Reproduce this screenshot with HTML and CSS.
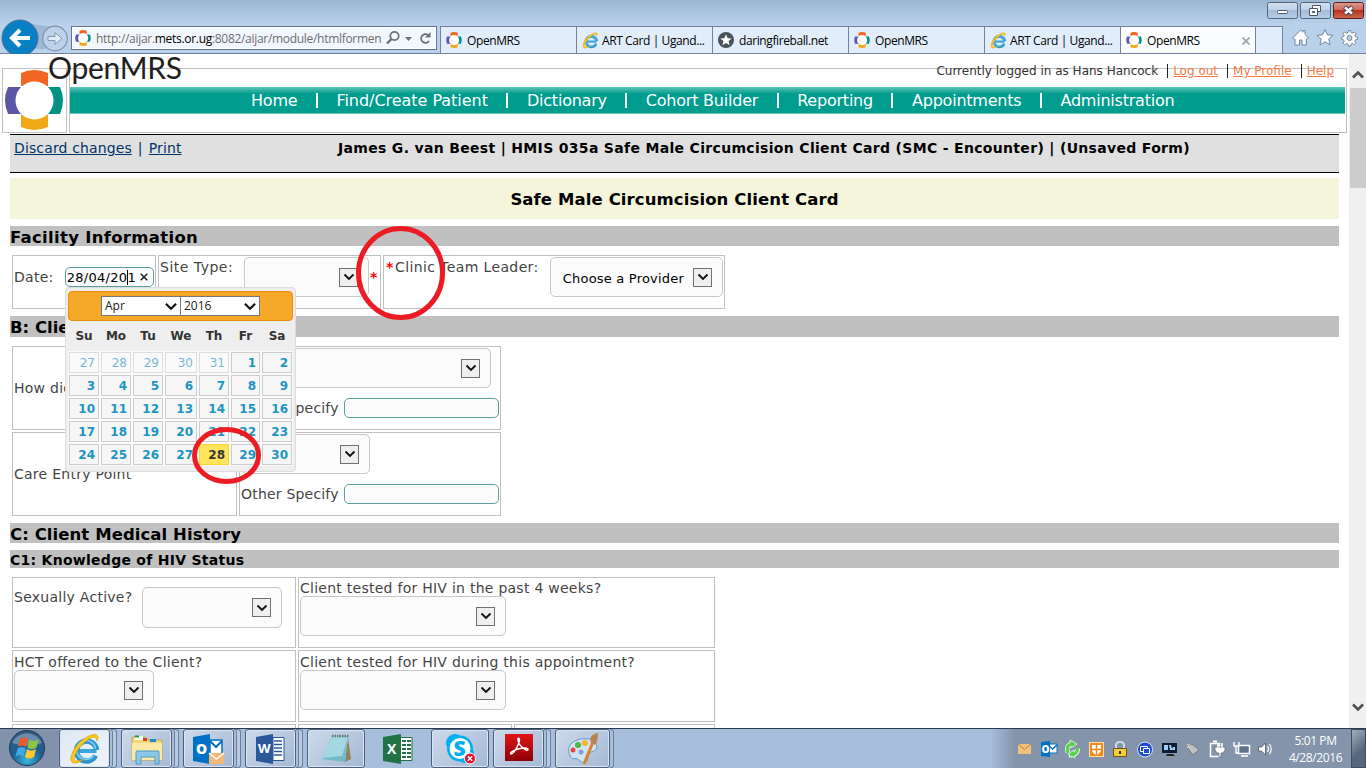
FILE: index.html
```html
<!DOCTYPE html>
<html lang="en">
<head>
<meta charset="utf-8">
<title>OpenMRS</title>
<link rel="stylesheet" href="styles.css">
</head>
<body>
<svg class="defs" width="0" height="0">
  <defs>
    <symbol id="mrs" viewBox="0 0 58 60">
      <path d="M16 3Q29-3 43 3V16H16Z" fill="#f26522"/>
      <path d="M16 44H43V57Q29 63 16 57Z" fill="#f0a818"/>
      <path d="M3 17H16V44H3Q-3 30 3 17Z" fill="#5b57a6"/>
      <path d="M42 17H55Q61 30 55 44H42Z" fill="#009384"/>
      <circle cx="29.500" cy="30.500" r="19" fill="#fff"/>
    </symbol>
    <symbol id="ie" viewBox="0 0 32 32">
      <path d="M27.500 18H9.500" stroke="#3ba4dc" stroke-width="4"/>
      <path d="M26.500 22.500A10 10 0 1 1 27.500 17" fill="none" stroke="#2f93cf" stroke-width="5.500"/>
      <path d="M25 22A9.500 9.500 0 1 1 26.500 16" fill="none" stroke="#72cdf3" stroke-width="1.800"/>
      <path d="M4 30C-3 26 8 8 20 3 27 0 31 2 28 8 28 3 23 3 17 8 8 15 1 28 8 28Q12 28 15 26 9 31 4 30Z" fill="#fcc71b" stroke="#e0a000" stroke-width=".7"/>
    </symbol>
    <symbol id="chev" viewBox="0 0 12 8"><path d="M1.500 1.500 6 6 10.500 1.500" fill="none" stroke="#111" stroke-width="1.900"/></symbol>
  </defs>
</svg>

<header class="chrome">
  <div class="titlebar">
    <svg class="winbtns" width="98" height="18" viewBox="0 0 98 18">
      <defs>
        <linearGradient id="gb" x2="0" y2="1"><stop offset="0" stop-color="#d2e0f0"/><stop offset=".48" stop-color="#bfd2e8"/><stop offset=".5" stop-color="#a4bcd8"/><stop offset="1" stop-color="#b9cfe8"/></linearGradient>
        <linearGradient id="gr" x2="0" y2="1"><stop offset="0" stop-color="#dc9a90"/><stop offset=".48" stop-color="#cf6857"/><stop offset=".5" stop-color="#b8321c"/><stop offset="1" stop-color="#cd6a4d"/></linearGradient>
      </defs>
      <rect x="1.500" y=".5" width="30" height="16" rx="2" fill="url(#gb)" stroke="#54657c"/>
      <rect x="34.500" y=".5" width="30" height="16" rx="2" fill="url(#gb)" stroke="#54657c"/>
      <rect x="67.500" y=".5" width="30" height="16" rx="2" fill="url(#gr)" stroke="#5e1c1c"/>
      <rect x="11.500" y="8.500" width="10" height="3" rx="1" fill="#fff" stroke="#4d5666"/>
      <path d="M46.500 3.500h8v6h-8z" fill="#fff" stroke="#4d5666"/>
      <path d="M43.500 6.500h8v7h-8z" fill="#fff" stroke="#4d5666"/><path d="M46.500 9.500h2v1h-2z" fill="#8ba" stroke="#4d5666"/>
      <path d="m78.500 5 8 7m0-7-8 7" stroke="#4d4a5a" stroke-width="4.500"/><path d="m79 5.500 7 6m0-6-7 6" stroke="#fff" stroke-width="2.400"/>
    </svg>
  </div>
  <div class="navrow">
    <svg class="navbtns" width="71" height="35" viewBox="0 0 71 35">
      <path d="M22 2Q42 8 53 7L60 12 45 30H20Z" fill="#94a9c5" opacity=".65"/>
      <circle cx="20" cy="19" r="18" fill="#0a80c4" stroke="#4a6f96"/>
      <path d="M30 19H12m8-8-8 8 8 8" fill="none" stroke="#fff" stroke-width="4"/>
      <circle cx="55" cy="19.500" r="12.300" fill="#bdd2ea" stroke="#7f93ac" stroke-width="1.200"/>
      <path d="M48 17.500h7v-4l7 6-7 6v-4h-7z" fill="#e0eaf5" stroke="#8497ae"/>
    </svg>
    <div class="address">
      <svg width="16" height="16"><use href="#mrs"/></svg>
      <span class="url">http://aijar.<b>mets.or.ug</b>:8082/aijar/module/htmlformen</span>
      <svg class="addr-icons" width="48" height="16" viewBox="0 0 48 16">
        <circle cx="8.500" cy="6" r="4.200" fill="none" stroke="#6d7073" stroke-width="1.800"/><path d="M5.500 9 1 13.500" stroke="#6d7073" stroke-width="2.400"/>
        <path d="M19 7h7l-3.500 4z" fill="#6d7073"/>
        <path d="M43 11A4.300 4.300 0 1 1 42 5" fill="none" stroke="#6d7073" stroke-width="1.900"/><path d="M44.500 2v5.500H39z" fill="#6d7073"/>
      </svg>
    </div>
    <div class="tabs">
      <div class="tab"><svg width="16" height="16"><use href="#mrs"/></svg><span>OpenMRS</span></div>
      <div class="tab"><svg width="17" height="17"><use href="#ie"/></svg><span class="art">ART Card | Ugand...</span></div>
      <div class="tab"><svg width="16" height="16" viewBox="0 0 16 16"><circle cx="8" cy="8" r="8" fill="#4a525a"/><path d="m8 2.200 1.600 4 4.200.2-3.300 2.700 1.100 4.100L8 10.900l-3.600 2.300 1.100-4.100L2.200 6.400l4.200-.2z" fill="#fff"/></svg><span>daringfireball.net</span></div>
      <div class="tab"><svg width="16" height="16"><use href="#mrs"/></svg><span>OpenMRS</span></div>
      <div class="tab"><svg width="17" height="17"><use href="#ie"/></svg><span class="art">ART Card | Ugand...</span></div>
      <div class="tab active"><svg width="16" height="16"><use href="#mrs"/></svg><span>OpenMRS</span><svg class="close" width="8" height="8" viewBox="0 0 8 8"><path d="m.5.500 7 7m0-7-7 7" stroke="#a2a6ab" stroke-width="1.800"/></svg></div>
      <div class="newtab"></div>
    </div>
    <svg class="tools" width="68" height="20" viewBox="0 0 68 20" fill="#fff" stroke="#75879c" stroke-width="1">
      <path d="m.7 10 8-8 2.300 2.300V2.500h2v3.800l3.500 3.700-1.500 1.500-.7-.6V17H10v-5H7.500v5H3v-6.100l-.8.600z"/>
      <path d="m33 1.500 2.300 5.300 5.800.5-4.400 3.800 1.400 5.700-5.100-3-5.100 3 1.400-5.700-4.400-3.800 5.800-.5z"/>
      <path d="M56.500 2.500h2l.5 2 1.500.6 2-1.200 1.500 1.500-1.200 2 .6 1.400 2.100.5v2l-2.100.6-.6 1.400 1.200 1.900-1.500 1.500-2-1.200-1.500.7-.5 2h-2l-.5-2-1.500-.7-2 1.200-1.500-1.500 1.200-1.900-.6-1.400-2.100-.6v-2l2.100-.5.600-1.400-1.200-2 1.500-1.500 2 1.200 1.500-.6z"/><circle cx="57.500" cy="10" r="2.500" fill="#b8cde8"/>
    </svg>
  </div>
</header>

<div class="view">
  <main class="page">
    <div class="banner">
      <div class="logo-box"><svg width="58" height="60"><use href="#mrs"/></svg></div>
      <span class="wordmark">OpenMRS</span>
      <div class="banner-main">
        <div class="user"><span class="who">Currently logged in as Hans Hancock</span><span class="ul"><a>Log out</a></span><span class="ul"><a>My Profile</a></span><span class="ul"><a>Help</a></span></div>
        <nav class="menu"><span>Home</span><i></i><span class="find">Find/Create Patient</span><i></i><span>Dictionary</span><i></i><span>Cohort Builder</span><i></i><span>Reporting</span><i></i><span>Appointments</span><i></i><span>Administration</span></nav>
      </div>
    </div>

    <div class="form">
      <div class="formhead"><span class="links"><a>Discard changes</a><span class="vbar">|</span><a>Print</a></span><b>James G. van Beest | HMIS 035a Safe Male Circumcision Client Card (SMC - Encounter) | (Unsaved Form)</b></div>
      <div class="cardtitle">Safe Male Circumcision Client Card</div>

      <h3 class="bar b1">Facility Information</h3>
      <div class="grid g1">
        <div class="cell date"><span>Date:</span><div class="dateinput"><span>28/04/20<i class="caret"></i>1</span><svg width="8" height="8" viewBox="0 0 8 8"><path d="m.7.700 6.600 6.600m0-6.600-6.600 6.600" stroke="#222" stroke-width="1.500"/></svg></div></div>
        <div class="cell site"><span>Site Type:</span><div class="sel w125"><div class="drop"><svg width="12" height="8"><use href="#chev"/></svg></div></div><em>*</em></div>
        <div class="cell leader"><em>*</em><span>Clinic Team Leader:</span><div class="sel w173"><span>Choose a Provider</span><div class="drop"><svg width="12" height="8"><use href="#chev"/></svg></div></div></div>
      </div>

      <h3 class="bar b2">B: Client</h3>
      <div class="grid g2">
        <div class="cell mid"><span>How did</span></div>
        <div class="cell stack"><div class="sel w250"><div class="drop"><svg width="12" height="8"><use href="#chev"/></svg></div></div><div class="spec"><span>Other Specify</span><div class="txt"></div></div></div>
        <div class="cell mid"><span>Care Entry Point</span></div>
        <div class="cell stack"><div class="sel w129"><div class="drop"><svg width="12" height="8"><use href="#chev"/></svg></div></div><div class="spec"><span>Other Specify</span><div class="txt"></div></div></div>
      </div>

      <h3 class="bar b3">C: Client Medical History</h3>
      <h4 class="bar b4">C1: Knowledge of HIV Status</h4>
      <div class="grid g3">
        <div class="cell active-q"><span>Sexually Active?</span><div class="sel w140 tall"><div class="drop"><svg width="12" height="8"><use href="#chev"/></svg></div></div></div>
        <div class="cell q wide"><span>Client tested for HIV in the past 4 weeks?</span><div class="sel w206"><div class="drop"><svg width="12" height="8"><use href="#chev"/></svg></div></div></div>
        <div class="cell q low"><span>HCT offered to the Client?</span><div class="sel w140"><div class="drop"><svg width="12" height="8"><use href="#chev"/></svg></div></div></div>
        <div class="cell q low wide"><span>Client tested for HIV during this appointment?</span><div class="sel w206"><div class="drop"><svg width="12" height="8"><use href="#chev"/></svg></div></div></div>
        <div class="cell"></div><div class="cell"></div><div class="cell"></div>
      </div>
    </div>
  </main>
  <aside class="scroll">
    <svg width="12" height="8" viewBox="0 0 12 8"><path d="M1 6.500 6 1.500 11 6.500" fill="none" stroke="#505050" stroke-width="2.600"/></svg>
    <div class="thumb"></div>
    <svg class="down" width="12" height="8" viewBox="0 0 12 8"><path d="M1 1.500 6 6.500 11 1.500" fill="none" stroke="#505050" stroke-width="2.600"/></svg>
  </aside>
</div>

<section class="picker">
  <div class="phead"><div class="psel">Apr<svg width="14" height="9"><use href="#chev"/></svg></div><div class="psel">2016<svg width="14" height="9"><use href="#chev"/></svg></div></div>
  <div class="dow"><span>Su</span><span>Mo</span><span>Tu</span><span>We</span><span>Th</span><span>Fr</span><span>Sa</span></div>
  <div class="days">
    <span class="o">27</span><span class="o">28</span><span class="o">29</span><span class="o">30</span><span class="o">31</span><span>1</span><span>2</span>
    <span>3</span><span>4</span><span>5</span><span>6</span><span>7</span><span>8</span><span>9</span>
    <span>10</span><span>11</span><span>12</span><span>13</span><span>14</span><span>15</span><span>16</span>
    <span>17</span><span>18</span><span>19</span><span>20</span><span>21</span><span>22</span><span>23</span>
    <span>24</span><span>25</span><span>26</span><span>27</span><span class="today">28</span><span>29</span><span>30</span>
  </div>
</section>

<svg class="marks" width="1366" height="768" fill="none" stroke="#ed1c24" stroke-width="5">
  <ellipse cx="400.500" cy="273" rx="42" ry="44.500"/>
  <ellipse cx="226.500" cy="455.500" rx="32" ry="26"/>
</svg>

<footer class="taskbar">
  <div class="start"><svg width="38" height="38" viewBox="0 0 38 38">
    <defs><radialGradient id="orb" cy=".85" r=".85"><stop offset="0" stop-color="#35b8dc"/><stop offset=".5" stop-color="#1d5f90"/><stop offset="1" stop-color="#36587c"/></radialGradient></defs>
    <circle cx="19" cy="19" r="17.500" fill="url(#orb)" stroke="#1c3857"/>
    <path d="M4 14a16 15 0 0 1 30 0q-15 5-30 0z" fill="#b7cadb" opacity=".45"/>
    <path d="M12 10q4-3 8 0l-2 8q-4-3-8 0z" fill="#ee5a26"/><path d="M21.500 10.500q4 3 9 0l-2 8q-5 3-9 0z" fill="#8dc63f"/>
    <path d="M9.500 19.500q4-3 8 0l-2 8q-4-3-8 0z" fill="#3fa9e8"/><path d="M19 20q4 3 9 0l-2 8q-5 3-9 0z" fill="#fdc72f"/>
  </svg></div>
  <div class="task lit w51"><svg width="32" height="32"><use href="#ie"/></svg></div><div class="pile"></div>
  <div class="task w51"><svg width="34" height="32" viewBox="0 0 34 32">
    <path d="M2 4h13l2 3h15v20H2z" fill="#f3d67c" stroke="#c9a44a"/><path d="M5 3h8v4H5z" fill="#fff"/><path d="M5 2.500h4v2H5z" fill="#18a03a"/><path d="M13 5h4v3h-4z" fill="#d2432a"/><path d="M20 6h6v3h-6z" fill="#2486cf"/>
    <path d="M2 10h30v17H2z" fill="#fbe9a6"/><path d="M6 19q0-1 1-1h21q1 0 1 1v12h-4v-7H11v7H6z" fill="#8cc9e8" stroke="#4b9ac4"/>
  </svg></div><div class="pile"></div>
  <div class="task w51"><svg width="33" height="32" viewBox="0 0 33 32">
    <path d="M18 7h12v14H18z" fill="#fff" stroke="#0072c6" stroke-width="1.500"/><path d="m18 8 6 6 6-6" fill="none" stroke="#0072c6" stroke-width="2"/><path d="M1 4 18 1v30L1 28z" fill="#0072c6"/>
    <text x="4" y="21" font-family="Open Sans" font-weight="800" font-size="14" fill="#fff">O</text><path d="M17 20h15v11H17z" fill="#f3b778"/><path d="m17 20 7.500 6 7.500-6" stroke="#fff" fill="none" stroke-width="1.500"/>
  </svg></div><div class="pile"></div>
  <div class="task w51"><svg width="32" height="32" viewBox="0 0 32 32">
    <path d="M18 4.500h11v23H18z" fill="#fff" stroke="#2b579a"/><path d="M19 8h8m-8 3.500h8m-8 3.500h8m-8 3.500h8m-8 3.500h8" stroke="#2b579a" stroke-width="1.300"/><path d="M1 4 18 1v30L1 28z" fill="#2b579a"/>
    <text x="3" y="20" font-family="Open Sans" font-weight="700" font-size="13" fill="#fff">W</text>
  </svg></div><div class="pile"></div>
  <div class="task w58"><svg width="34" height="32" viewBox="0 0 34 32">
    <path d="M29 5 32 26 26 29z" fill="#8f8460"/><path d="M13 3h16l-3 26-23-3z" fill="#73bac9"/><path d="m13 3 16 1-6 19-20 2z" fill="#a3d8e3"/><path d="M13 3h17" stroke="#69766c" stroke-width="2.500" stroke-dasharray="1.500 1"/>
  </svg></div>
  <div class="task plain w58"><svg width="32" height="32" viewBox="0 0 32 32">
    <path d="M18 4.500h12v23H18z" fill="#fff" stroke="#217346"/><path d="M20 8h4m1 0h4m-9 4h4m1 0h4m-9 4h4m1 0h4m-9 4h4m1 0h4m-9 4h4m1 0h4" stroke="#217346" stroke-width="2"/><path d="M1 4 19 1v30L1 28z" fill="#217346"/>
    <text x="5" y="21" font-family="Open Sans" font-weight="700" font-size="14" fill="#fff">X</text>
  </svg></div>
  <div class="task w58"><svg width="32" height="32" viewBox="0 0 32 32">
    <circle cx="11" cy="10" r="9" fill="#00aff0"/><circle cx="21" cy="21" r="9" fill="#00aff0"/><circle cx="16" cy="15.500" r="13" fill="#00aff0"/><circle cx="16" cy="15.500" r="10.500" fill="#fff"/>
    <text x="9.500" y="23" font-family="Open Sans" font-weight="800" font-size="21" fill="#00aff0">S</text><circle cx="26" cy="25.500" r="5.500" fill="#d9162c" stroke="#fff"/><path d="m23.800 23.300 4.400 4.400m0-4.400-4.400 4.400" stroke="#fff" stroke-width="1.400"/>
  </svg></div>
  <div class="task w51"><svg class="up" width="30" height="30" viewBox="0 0 30 30">
    <defs><linearGradient id="pdf" x2="0" y2="1"><stop offset="0" stop-color="#e2141a"/><stop offset="1" stop-color="#8c0205"/></linearGradient></defs>
    <path d="M1 2h28v27H1z" fill="url(#pdf)"/><path d="M14 6q3 0 0 7-4 9-7 9-2-2 7-5 8-2 10 0 0 3-5-1-6-5-5-10" fill="none" stroke="#fff" stroke-width="1.500"/>
  </svg></div><div class="pile"></div>
  <div class="task w55"><svg width="34" height="34" viewBox="0 0 34 34">
    <path d="M3 21Q0 11 14 7q16-2 17 7 0 5-6 6-4 2-3 6 0 6-7 4-4-5-8-3-3-1-4-6z" fill="#cfe3f2" stroke="#6b9cc2"/>
    <circle cx="7" cy="18" r="2.500" fill="#e14b3b"/><circle cx="12" cy="13" r="3" fill="#4fb648"/><circle cx="19" cy="11" r="3" fill="#f4b62a"/><circle cx="15" cy="20" r="2.500" fill="#7aa7d1"/>
    <path d="m27 10-9 22" stroke="#d9822b" stroke-width="3"/><path d="M25 11q-3-8 7-10 0 8-3 12z" fill="#b48752"/>
  </svg></div><div class="pile short"></div>
  <div class="tray">
    <svg class="trayicons" width="260" height="20" viewBox="0 0 260 20">
      <path d="M2 5h13v10H2z" fill="#f2c27c"/><path d="m2 5 6.500 5.500L15 5" fill="none" stroke="#a9834d"/>
      <path d="M32 5h9v9h-9z" fill="#fff" stroke="#0072c6"/><path d="m32 6 4.500 4L41 6" fill="none" stroke="#0072c6" stroke-width="1.500"/><path d="m25 3 9-1v16l-9-1z" fill="#0072c6"/><text x="25.500" y="14" font-family="Open Sans" font-weight="800" font-size="10" fill="#fff">O</text>
      <path d="M57 4.500Q49 6 52 13.500M53 16q8 1 9-6.500" fill="none" stroke="#e9ffe5" stroke-width="4.500"/><path d="m54 1 7 4-6 4zm5 18-7-4 6-4z" fill="#55d14d" stroke="#e9ffe5" stroke-width=".8"/><path d="M57 4.500Q49 6 52 13.500M54 15.800q8 0 7.500-7" fill="none" stroke="#55d14d" stroke-width="3"/>
      <rect x="73.500" y="3.500" width="14" height="14" fill="#ef8b1d" stroke="#ffe0a0"/><path d="M76 6h9v4q0 4-4.500 6Q76 14 76 10z" fill="#fff"/><path d="M80.500 6v10M76 10.500h9" stroke="#ef8b1d" stroke-width="1.500"/>
      <path d="M100 10V6q0-3 4-3t4 3v4" fill="none" stroke="#d5d9df" stroke-width="2"/><path d="M97.500 9.500h13v8h-13z" fill="#f5cd3c" stroke="#6b5514"/><path d="M104 12v3" stroke="#333" stroke-width="2"/>
      <circle cx="129" cy="10.500" r="7.500" fill="#1c4cc8" stroke="#dbe6ff"/><path d="M124.500 7.500h7v5h-7z" fill="none" stroke="#fff"/><path d="M127.500 9.500h6v5h-6z" fill="#1c4cc8" stroke="#fff"/>
      <path d="M146 4h15v10h-15z" fill="#101b35"/><path d="M148 6h4v5h-4zm5 0h2l1 4 1-2h2v3h-5z" fill="#9fd0f8"/><path d="M151 15h6l2 2h-9z" fill="#222"/>
      <path d="m171 8 5-3 7 6-6 5z" fill="#bfc2c4" stroke="#777"/><path d="m171 5 4 4m-4 0 3-4" stroke="#ddd"/>
      <path d="M194.500 4.500h9v13h-9z" fill="none" stroke="#fff" stroke-width="1.500"/><path d="M197 2.500h4" stroke="#fff" stroke-width="2"/><path d="M199 8h10v3l-2 3h-2v4h-2v-4h-2l-2-3z" fill="#fff" stroke="#555" stroke-width=".6"/><path d="M202 4v4m4-4v4" stroke="#fff" stroke-width="1.600"/>
      <path d="M222.500 6.500h11v8h-11zM225 17h7" fill="#5e7189" stroke="#fff" stroke-width="1.500"/><path d="M218 3v4h5V3m-3 4v7h3" fill="none" stroke="#fff" stroke-width="1.400"/>
      <path d="M242.500 8h3l4-4v12l-4-4h-3z" fill="#fff" stroke="#444" stroke-width=".7"/><path d="M251.500 7q2 3 0 6m2-8q3.500 5 0 10" fill="none" stroke="#fff" stroke-width="1.200"/>
    </svg>
    <div class="clock"><span>5:01 PM</span><span>4/28/2016</span></div>
    <div class="peek"></div>
  </div>
</footer>
</body>
</html>
```

FILE: styles.css
```css
* { box-sizing: border-box; }
html, body { margin: 0; padding: 0; }
body { width: 1366px; height: 768px; overflow: hidden; display: flex; flex-direction: column; position: relative; background: #fff; font: 14px/18px "DejaVu Sans", sans-serif; color: #444; }
svg { display: block; flex: none; }
.defs { position: absolute; }
span, b, a { white-space: nowrap; }

/* browser frame */
.chrome { height: 54px; flex: none; background: linear-gradient(#9cb6d1, #b9d1eb 24px); border-bottom: 1px solid #71829a; font: 12px/16px "Open Sans", sans-serif; color: #000; }
.titlebar { height: 26px; display: flex; justify-content: flex-end; padding: 2px 2px 0 0; }
.navrow { height: 27px; display: flex; }
.navbtns { margin-top: -7px; }
.address { width: 366px; height: 24px; margin-right: 3px; border: 1px solid #63758d; background: #f2f7fd; box-shadow: inset 0 0 0 1px #fff; display: flex; align-items: center; padding: 0 4px 0 3px; color: #6d6d6d; }
.url { width: 286px; margin: 2px 0 0 5px; letter-spacing: -.3px; line-height: 18px; }
.url b { font-weight: 400; color: #000; }
.addr-icons { margin-left: 5px; }
.tabs { display: flex; }
.tab { width: 136px; height: 27px; border: 1px solid #71829a; border-width: 1px 0 0 1px; background: #e1edfa; display: flex; align-items: center; gap: 5px; padding-left: 5px; letter-spacing: -.4px; }
.tab span { margin-top: 2px; }
.tab .art { letter-spacing: -.4px; margin-left: -2px; }
.tab.active { background: #fbfcfe; border-right-width: 1px; }
.tab .close { margin: 1px 5px 0 auto; }
.newtab { width: 27px; border: 1px solid #71829a; border-width: 1px 1px 0 0; background: #e1edfa; }
.tools { margin: 2px 0 0 9px; }

/* page body */
.view { height: 674px; flex: none; display: flex; overflow: hidden; }
.page { width: 1349px; height: 674px; overflow: hidden; flex: none; }
.scroll { width: 17px; background: #f0f0f0; display: flex; flex-direction: column; align-items: center; padding-top: 17px; }
.thumb { width: 16px; height: 100px; background: #cdcdcd; margin-top: 9px; }
.scroll .down { margin: auto 0 17px; }

.banner { height: 65px; margin: 14px 0 0 2px; display: flex; gap: 2px; position: relative; }
.logo-box { width: 65px; border: 1px solid #c0c0c0; padding: 1px 0 0 2px; background: #fff; }
.wordmark { position: absolute; left: 46px; top: -14px; font: 30px/26px Lato, sans-serif; color: #231f20; letter-spacing: -.3px; }
.banner-main { width: 1278px; border: 1px solid #c0c0c0; }
.user { height: 18px; margin-top: -8px; padding-right: 12px; display: flex; justify-content: flex-end; font-size: 12px; line-height: 20px; color: #333; }
.ul { margin-left: 9px; padding-left: 5px; border-left: 1px solid #222; height: 14px; line-height: 14px; margin-top: 3px; }
.ul a { color: #f47a45; text-decoration: underline; }
.menu { height: 27px; margin-top: 8px; background: linear-gradient(#5fc4b8, #009c8d 7px); border-bottom: 1px solid #6fc5ba; display: flex; align-items: center; padding: 1px 0 0 181px; color: #fff; font-size: 16px; letter-spacing: -.22px; width: 1275px; }
.menu .find { letter-spacing: -.03px; }
.menu i { width: 2px; height: 15px; background: #fff; margin: 0 18.500px; }

.form { margin: 1px 10px 0; }
.formhead { height: 39px; background: #e0e0e0; border: 1px solid #000; border-width: 1px 0; padding: 4px 0 0 4px; display: flex; color: #000; letter-spacing: .32px; }
.links { width: 324px; color: #003366; letter-spacing: .13px; }
.links a { text-decoration: underline; }
.vbar { margin: 0 6px; }
.cardtitle { height: 41px; margin-top: 5px; background: #f5f5dc; text-align: center; font: bold 16.500px/43px "DejaVu Sans", sans-serif; letter-spacing: .1px; color: #000; }
.bar { margin: 0; background: #c0c0c0; color: #000; font: bold 16.500px/23px "DejaVu Sans", sans-serif; white-space: nowrap; }
.b1 { height: 20px; margin-top: 7px; letter-spacing: .3px; }
.b2 { height: 21px; margin-top: 7px; }
.b3 { height: 20px; margin-top: 7px; letter-spacing: .07px; }
.b4 { height: 18px; margin-top: 7px; font-size: 14px; line-height: 20px; letter-spacing: .27px; }
.grid { display: grid; gap: 2px; margin: 9px 0 0 2px; letter-spacing: .26px; }
.g1 { grid-template: 54px / 144px 223px 342px; }
.g2 { grid-template: 84px 84px / 225px 262px; }
.g3 { grid-template: 71px 72px 20px / 284px 214px 201px; }
.wide { grid-column: span 2; }
.cell { border: 1px solid #c0c0c0; padding: 1px; display: flex; min-width: 0; }
.cell em { color: #f00; font-style: normal; font-weight: bold; }
.date { padding-top: 11px; }
.date > span { width: 51px; line-height: 20px; }
.dateinput { width: 90px; height: 20px; border: 1px solid #5f9ea0; border-radius: 5px; background: #fcfcfc; color: #000; font-size: 13px; line-height: 19px; padding-left: 1px; display: flex; align-items: center; gap: 4px; letter-spacing: .3px; }
.caret { display: inline-block; width: 1px; height: 15px; background: #000; vertical-align: -3px; margin-right: -1px; }
.site > span { width: 84px; line-height: 21px; letter-spacing: .5px; }
.site > em { margin: 11px 0 0 1px; }
.leader > em { padding: 1px 0 0 1px; width: 10px; }
.leader > span { width: 155px; line-height: 21px; letter-spacing: .38px; }
.sel { height: 40px; border: 1px solid #c8c8c8; border-radius: 5px; background: #fbfbfb; display: flex; align-items: center; justify-content: flex-end; padding-right: 10px; flex: none; color: #000; font-size: 13px; }
.sel > span { padding-top: 3px; letter-spacing: .2px; }
.drop { width: 19px; height: 19px; border: 1px solid #707070; background: #efefef; display: flex; align-items: center; justify-content: center; margin-left: 9px; }
.w125 { width: 125px; }
.w173 { width: 173px; }
.w250 { width: 250px; }
.w129 { width: 129px; }
.w140 { width: 140px; }
.w206 { width: 206px; }
.tall { height: 41px; margin-top: 8px; }
.mid { align-items: center; }
.stack { flex-direction: column; }
.spec { display: flex; align-items: center; margin-top: 10px; }
.spec span { width: 103px; letter-spacing: .2px; }
.txt { width: 155px; height: 20px; border: 1px solid #5f9ea0; border-radius: 5px; background: #fcfcfc; }
.active-q > span { width: 128px; line-height: 37px; }
.q { flex-direction: column; }
.q.low { padding-top: 2px; }
.q > span { height: 17px; line-height: 19px; }

/* calendar popup */
.picker { position: absolute; left: 65px; top: 287px; width: 231px; height: 185px; border: 1px solid #ddd; border-radius: 4px; background: #eee; padding: 3px 2px; }
.phead { height: 30px; border: 1px solid #e78f08; border-radius: 4px; background: #f6a828; display: flex; justify-content: center; align-items: center; }
.psel { width: 80px; height: 20px; border: 1px solid #777; background: #fff; color: #222; font: 12px/18px "Open Sans", sans-serif; padding: 0 2px 0 3px; display: flex; justify-content: space-between; align-items: center; }
.psel + .psel { margin-left: -1px; }
.dow, .days { display: grid; grid-template-columns: 30px 30px 30px 32px 30px 29px 30px; gap: 2px; padding-left: 1px; }
.dow { height: 31px; text-align: center; font: bold 12px/31px "DejaVu Sans", sans-serif; color: #333; }
.days span { height: 21px; border: 1px solid #ccc; background: #f6f6f6; color: #1c94c4; font: bold 12px/20px "DejaVu Sans", sans-serif; text-align: right; padding-right: 3px; box-shadow: 0 0 0 1px #fafafa; }
.days .o { font-weight: 400; color: #74b9d9; border-color: #ddd; background: #fafafa; }
.days .today { background: #ffe45c; border-color: #fed22f; color: #363636; }
.marks { position: absolute; left: 0; top: 0; }

/* taskbar */
.taskbar { height: 40px; flex: none; border-top: 1px solid #2b3a4e; background: linear-gradient(90deg, #8292aa 58px, #a7bfdd 61px, #a7bfdd 990px, #8494ab 1015px); display: flex; }
.start { width: 59px; padding-left: 8px; }
.task { height: 39px; border: 1px solid #4c607d; border-radius: 3px; background: linear-gradient(135deg, #ccd9ea, #a5b9d4); box-shadow: inset 0 0 0 1px #dbe5f1; display: flex; align-items: center; justify-content: center; margin-right: 4px; flex: none; }
.w51 { width: 51px; }
.w55 { width: 55px; }
.w58 { width: 58px; }
.task .up { margin-bottom: 3px; }
.task.lit { background: linear-gradient(135deg, #dfe8f3, #eef3f8); }
.task.plain { background: none; border: 0; box-shadow: none; }
.pile { width: 7px; margin: 0 4px 0 -4px; border: 1px solid #6b7f9c; border-left: 0; box-shadow: inset -3px 0 #b9cbe1, inset -4px 0 #6b7f9c; border-radius: 0 3px 3px 0; flex: none; }
.pile.short { width: 4px; box-shadow: none; }
.tray { margin-left: auto; display: flex; align-items: center; }
.trayicons { margin-right: 2px; }
.clock { width: 75px; text-align: center; color: #fff; font: 12px/17px "Open Sans", sans-serif; letter-spacing: -.4px; display: flex; flex-direction: column; margin-right: -2px; }
.peek { width: 15px; height: 39px; border: 1px solid #3f4d60; background: linear-gradient(135deg, #a3afbf, #56667b 60%); }
```
